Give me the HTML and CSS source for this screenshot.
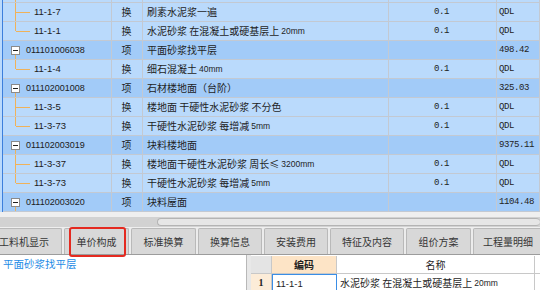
FILE: index.html
```html
<!DOCTYPE html>
<html lang="zh">
<head>
<meta charset="utf-8">
<link rel="stylesheet" href="styles.css">
</head>
<body>
<div class="app">
  <div class="tree">
    <div class="rows">
      <div class="row"><div class="c code"><span class="tl tee"></span></div><div class="c type"></div><div class="c name"></div><div class="c qty"></div><div class="c unit"></div></div>
      <div class="row"><div class="c code"><span class="tl tee"></span><span class="cd child">11-1-7</span></div><div class="c type">换</div><div class="c name">刷素水泥浆一遍</div><div class="c qty">0.1</div><div class="c unit">QDL</div></div>
      <div class="row"><div class="c code"><span class="tl ell"></span><span class="cd child">11-1-1</span></div><div class="c type">换</div><div class="c name">水泥砂浆 在混凝土或硬基层上 <span class="lat">20mm</span></div><div class="c qty">0.1</div><div class="c unit">QDL</div></div>
      <div class="row parent"><div class="c code"><span class="box"></span><span class="cd">011101006038</span></div><div class="c type">项</div><div class="c name">平面砂浆找平层</div><div class="c qty"></div><div class="c unit">498.42</div></div>
      <div class="row"><div class="c code"><span class="tl ell"></span><span class="cd child">11-1-4</span></div><div class="c type">换</div><div class="c name">细石混凝土 <span class="lat">40mm</span></div><div class="c qty">0.1</div><div class="c unit">QDL</div></div>
      <div class="row parent"><div class="c code"><span class="box"></span><span class="cd">011102001008</span></div><div class="c type">项</div><div class="c name">石材楼地面（台阶）</div><div class="c qty"></div><div class="c unit">325.03</div></div>
      <div class="row"><div class="c code"><span class="tl tee"></span><span class="cd child">11-3-5</span></div><div class="c type">换</div><div class="c name">楼地面 干硬性水泥砂浆 不分色</div><div class="c qty">0.1</div><div class="c unit">QDL</div></div>
      <div class="row"><div class="c code"><span class="tl ell"></span><span class="cd child">11-3-73</span></div><div class="c type">换</div><div class="c name">干硬性水泥砂浆 每增减<span class="lat">5mm</span></div><div class="c qty">0.1</div><div class="c unit">QDL</div></div>
      <div class="row parent"><div class="c code"><span class="box"></span><span class="cd">011102003019</span></div><div class="c type">项</div><div class="c name">块料楼地面</div><div class="c qty"></div><div class="c unit">9375.11</div></div>
      <div class="row"><div class="c code"><span class="tl tee"></span><span class="cd child">11-3-37</span></div><div class="c type">换</div><div class="c name">楼地面干硬性水泥砂浆 周长≤<span class="lat">3200mm</span></div><div class="c qty">0.1</div><div class="c unit">QDL</div></div>
      <div class="row"><div class="c code"><span class="tl ell"></span><span class="cd child">11-3-73</span></div><div class="c type">换</div><div class="c name">干硬性水泥砂浆 每增减<span class="lat">5mm</span></div><div class="c qty">0.1</div><div class="c unit">QDL</div></div>
      <div class="row parent"><div class="c code"><span class="box"></span><span class="cd">011102003020</span></div><div class="c type">项</div><div class="c name">块料屋面</div><div class="c qty"></div><div class="c unit">1104.48</div></div>
    </div>
  </div>
  <div class="hscroll"><div class="track"><div class="thumb"></div></div></div>
  <div class="tabs">
    <div class="tab t1">工料机显示</div>
    <div class="tab">单价构成</div>
    <div class="tab">标准换算</div>
    <div class="tab t4">换算信息</div>
    <div class="tab t4">安装费用</div>
    <div class="tab t6">特征及内容</div>
    <div class="tab">组价方案</div>
    <div class="tab t8">工程量明细</div>
  </div>
  <div class="bottom">
    <div class="left-panel">平面砂浆找平层</div>
    <div class="splitter"></div>
    <div class="sub">
      <div class="srow shead">
        <div class="s rn corner"></div>
        <div class="s sc hcode">编码</div>
        <div class="s sn hname">名称</div>
        <div class="s se"></div>
      </div>
      <div class="srow">
        <div class="s rn num">1</div>
        <div class="s sc sel">11-1-1</div>
        <div class="s sn">水泥砂浆 在混凝土或硬基层上 <span class="lat">20mm</span></div>
        <div class="s se"></div>
      </div>
    </div>
  </div>
  <div class="annot"></div>
</div>
</body>
</html>
```

FILE: styles.css
```css
* { box-sizing: border-box; }
html, body { margin: 0; padding: 0; }
body {
  width: 540px;
  height: 290px;
  overflow: hidden;
  background: #ffffff;
  font-family: "Noto Sans CJK SC", "Liberation Sans", sans-serif;
  font-size: 10px;
  color: #1e1e1e;
}
.app { position: relative; width: 540px; height: 290px; overflow: hidden; }

/* top tree grid */
.tree {
  height: 212px;
  overflow: hidden;
  background: #badafc;
  padding-left: 2px;
}
.rows {
  margin-top: -16px;
  border-left: 1px solid #3c7fdc;
}
.row {
  display: grid;
  grid-template-columns: 109px 31px 246px 108px 43px;
  height: 19px;
  background: #badafc;
}
.row.parent { background: #a2cbf8; }
.c {
  position: relative;
  display: flex;
  align-items: center;
  height: 19px;
  border-right: 1px solid #c3c9d2;
  border-bottom: 1px solid #c3c9d2;
  white-space: nowrap;
  overflow: hidden;
  line-height: 18px;
}
.code { font-family: "Liberation Sans", sans-serif; font-size: 9px; color: #202020; }
.cd { padding-left: 23px; }
.cd.child { padding-left: 31px; font-size: 9.5px; }
.type { justify-content: center; padding-right: 1px; }
.name { padding-left: 4px; }
.lat { font-family: "Liberation Sans", sans-serif; font-size: 8.5px; margin-left: 2px; }
.qty, .unit {
  font-family: "Liberation Mono", monospace;
  font-size: 9px;
  letter-spacing: -0.4px;
  color: #222;
}
.qty { justify-content: center; padding-right: 2px; }
.unit { padding-left: 2px; }

/* tree connectors */
.tl { position: absolute; left: 12px; top: 0; width: 15px; }
.tl.tee { height: 19px; border-left: 1px solid #f0b25a; }
.tl.ell { height: 9px; border-left: 1px solid #f0b25a; }
.tl::after {
  content: "";
  position: absolute;
  left: 0;
  top: 9px;
  width: 14px;
  border-top: 1px solid #f0b25a;
}
.box {
  position: absolute;
  left: 8px;
  top: 5px;
  width: 9px;
  height: 9px;
  background: #ffffff;
  border: 1px solid #8a8a8a;
}
.box::before {
  content: "";
  position: absolute;
  left: 1px;
  top: 3px;
  width: 5px;
  border-top: 1px solid #202020;
}
.box::after {
  content: "";
  position: absolute;
  left: 3px;
  top: 8px;
  height: 5px;
  border-left: 1px solid #f0b25a;
}

/* horizontal scroll */
.hscroll {
  height: 16px;
  background: #efefef;
  padding-top: 5px;
}
.track {
  height: 10px;
  background: #d2d2d2;
  padding-top: 1px;
}
.thumb {
  margin-left: 157px;
  height: 8px;
  border-radius: 4px;
  background: #e6e6e6;
  border: 1px solid #b4b4b4;
  border-right: none;
}

/* tabs */
.tabs {
  display: flex;
  gap: 2px;
  height: 26px;
  background: #ececec;
  white-space: nowrap;
}
.tab {
  flex: none;
  width: 65px;
  height: 26px;
  display: flex;
  align-items: center;
  justify-content: center;
  background: #d8d8d8;
  border: 1px solid #b9b9b9;
  border-bottom: none;
  border-radius: 2px 2px 0 0;
  color: #363636;
  font-size: 10px;
}
.tab.t1 { width: 76px; margin-left: -14px; }
.tab.t4 { width: 64px; }
.tab.t6 { width: 74px; }
.tab.t8 { width: 70px; }

/* bottom */
.bottom {
  display: flex;
  height: 36px;
  border-top: 1px solid #9c9c9c;
  background: #ffffff;
}
.left-panel {
  width: 246px;
  padding: 1px 0 0 3px;
  color: #1d8be6;
  font-size: 10.5px;
  line-height: 16px;
}
.splitter {
  width: 5px;
  background: #e8e8e8;
  border-left: 1px solid #b8b8b8;
}
.sub { flex: 1; padding-top: 1px; }
.srow { display: flex; height: 18px; }
.s {
  flex: none;
  height: 18px;
  display: flex;
  align-items: center;
  border-right: 1px solid #c8c8c8;
  border-bottom: 1px solid #c8c8c8;
  white-space: nowrap;
  overflow: hidden;
}
.rn { width: 21px; justify-content: center; }
.corner { background: #e4e4e4; }
.num {
  background: #fcecd8;
  font-family: "Liberation Serif", serif;
  font-weight: bold;
  font-size: 10px;
}
.sc { width: 65px; padding-left: 3px; }
.sn { width: 198px; padding-left: 3px; }
.se { width: 5px; border-right: none; }
.hcode {
  background: #fde4c6;
  justify-content: center;
  font-weight: bold;
  padding-left: 0;
}
.hname { justify-content: center; padding-left: 0; }
.sel {
  border: 1px solid #3a8ee6;
  font-family: "Liberation Sans", sans-serif;
  font-size: 9.5px;
}

/* annotation overlay */
.annot {
  position: absolute;
  left: 69px;
  top: 227px;
  width: 57px;
  height: 30px;
  border: 2px solid #e42a20;
  border-radius: 3px;
}
```
